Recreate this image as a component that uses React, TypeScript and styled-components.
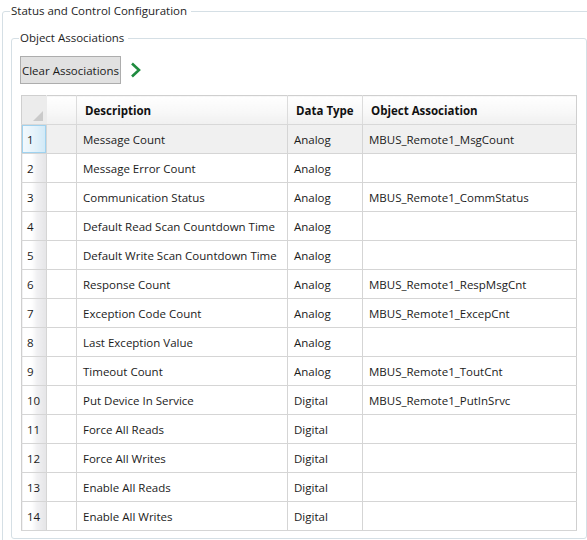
import React from "react";
import styled, { createGlobalStyle } from "styled-components";

const Global = createGlobalStyle`
  html, body { margin: 0; padding: 0; background: #ffffff; overflow: hidden; }
  body { font-family: "Open Sans", "Noto Sans", sans-serif; font-size: 11.5px; color: #1b1b1b; }
  * { box-sizing: border-box; }
`;

const Group = styled.fieldset<{ $outer?: boolean }>`
  margin: ${(p) => (p.$outer ? "3px 0 0 2px" : "0")};
  width: ${(p) => (p.$outer ? "594px" : "auto")};
  border: 1px solid #d5dfe5;
  border-radius: 3px;
  padding: ${(p) => (p.$outer ? "11px 8px 8px 8px" : "10px 9px 7px 8px")};
  min-width: 0;
`;

const Legend = styled.legend`
  padding: 0 4px 0 1px;
  margin-left: -1px;
  line-height: 16px;
  font-size: 11.5px;
  color: #1e1e1e;
`;

const Toolbar = styled.div`
  display: flex;
  align-items: center;
  gap: 9px;
  height: 28px;
`;

const Button = styled.button`
  height: 28px;
  width: 101px;
  padding: 0;
  border: 1px solid #adadad;
  background: #e1e1e1;
  font-family: inherit;
  font-size: 11.5px;
  color: #1b1b1b;
  white-space: nowrap;
`;

const Grid = styled.table`
  margin: 11px 0 0 1px;
  width: 555px;
  border-collapse: collapse;
  table-layout: fixed;
  border: 1px solid #cfcfcf;
`;

const Corner = styled.th`
  position: relative;
  height: 29px;
  background: #ececec;
  border-bottom: 1px solid #d8d8d8;
  border-right: 1px solid #ececec;
  padding: 0;
`;

const CornerTri = styled.span`
  position: absolute;
  right: 3px;
  bottom: 3px;
  width: 0;
  height: 0;
  border-left: 10px solid transparent;
  border-bottom: 10px solid #cacaca;
`;

const HeadCell = styled.th<{ $divider?: boolean }>`
  height: 29px;
  padding: 0 8px;
  text-align: left;
  font-weight: 700;
  font-size: 11.5px;
  color: #111;
  white-space: nowrap;
  background: linear-gradient(to bottom, #ffffff 0%, #f7f7f7 60%, #f0f0f0 100%);
  border-bottom: 1px solid #d8d8d8;
  border-left: ${(p) => (p.$divider ? "1px solid #dcdcdc" : "none")};
`;

const Row = styled.tr<{ $current?: boolean }>`
  height: 29px;
  background: ${(p) => (p.$current ? "#f0f0f0" : "#ffffff")};
`;

const RowHead = styled.td<{ $selected?: boolean }>`
  padding: 0 0 0 5px;
  font-size: 11.5px;
  border-bottom: 1px solid #d5d5d5;
  background: ${(p) =>
    p.$selected
      ? "linear-gradient(to right, #f2f9fd 0%, #e6f3fb 45%, #cfe8f6 100%)"
      : "linear-gradient(to right, #ffffff 0%, #ffffff 38%, #f1f1f3 60%, #e4e4e6 100%)"};
  box-shadow: ${(p) => (p.$selected ? "inset 0 0 0 1px #9fd2ef" : "none")};
`;

const Cell = styled.td`
  padding: 0 6px;
  font-size: 11.5px;
  white-space: nowrap;
  overflow: hidden;
  border-bottom: 1px solid #d5d5d5;
  border-left: 1px solid #d5d5d5;
`;

const Chevron = () => (
  <svg width="12" height="16" viewBox="0 0 12 16">
    <polyline points="2,1.5 9,8 2,14.5" fill="none" stroke="#1f8b3f" strokeWidth="2.6" />
  </svg>
);

type Item = { d: string; t: string; a: string };
const rows: Item[] = [
  { d: "Message Count", t: "Analog", a: "MBUS_Remote1_MsgCount" },
  { d: "Message Error Count", t: "Analog", a: "" },
  { d: "Communication Status", t: "Analog", a: "MBUS_Remote1_CommStatus" },
  { d: "Default Read Scan Countdown Time", t: "Analog", a: "" },
  { d: "Default Write Scan Countdown Time", t: "Analog", a: "" },
  { d: "Response Count", t: "Analog", a: "MBUS_Remote1_RespMsgCnt" },
  { d: "Exception Code Count", t: "Analog", a: "MBUS_Remote1_ExcepCnt" },
  { d: "Last Exception Value", t: "Analog", a: "" },
  { d: "Timeout Count", t: "Analog", a: "MBUS_Remote1_ToutCnt" },
  { d: "Put Device In Service", t: "Digital", a: "MBUS_Remote1_PutInSrvc" },
  { d: "Force All Reads", t: "Digital", a: "" },
  { d: "Force All Writes", t: "Digital", a: "" },
  { d: "Enable All Reads", t: "Digital", a: "" },
  { d: "Enable All Writes", t: "Digital", a: "" },
];

export default function App() {
  return (
    <>
      <Global />
      <Group $outer>
        <Legend>Status and Control Configuration</Legend>
        <Group>
          <Legend>Object Associations</Legend>
          <Toolbar>
            <Button>Clear Associations</Button>
            <Chevron />
          </Toolbar>
          <Grid>
            <colgroup>
              <col style={{ width: 25 }} />
              <col style={{ width: 30 }} />
              <col style={{ width: 211 }} />
              <col style={{ width: 75 }} />
              <col style={{ width: 214 }} />
            </colgroup>
            <thead>
              <tr>
                <Corner>
                  <CornerTri />
                </Corner>
                <HeadCell />
                <HeadCell $divider>Description</HeadCell>
                <HeadCell $divider>Data Type</HeadCell>
                <HeadCell $divider>Object Association</HeadCell>
              </tr>
            </thead>
            <tbody>
              {rows.map((r, i) => (
                <Row key={i} $current={i === 0}>
                  <RowHead $selected={i === 0}>{i + 1}</RowHead>
                  <Cell />
                  <Cell>{r.d}</Cell>
                  <Cell>{r.t}</Cell>
                  <Cell>{r.a}</Cell>
                </Row>
              ))}
            </tbody>
          </Grid>
        </Group>
      </Group>
    </>
  );
}
